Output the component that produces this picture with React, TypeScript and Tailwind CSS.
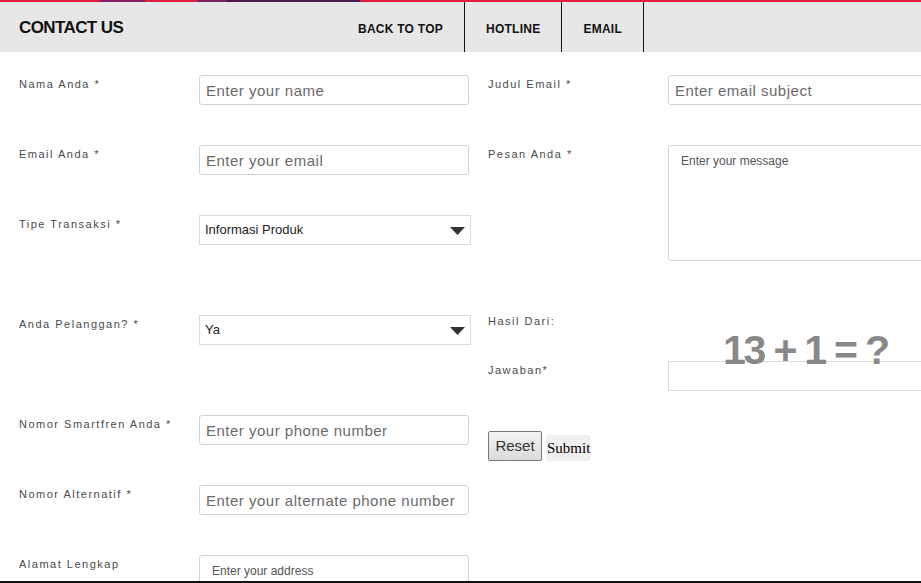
import React from "react";

const F = { fontFamily: '"Liberation Sans", Arial, sans-serif' };

function Label({ children }: { children: React.ReactNode }) {
  return (
    <div className="w-[180px] shrink-0 mt-[2px] text-[11px] leading-[15px] tracking-[1.5px] text-[#4a4a4a]">
      {children}
    </div>
  );
}

function TextInput({ ph }: { ph: string }) {
  return (
    <input
      placeholder={ph}
      className="w-[270px] h-[30px] rounded-[3px] border border-[#d2d2d2] bg-white px-[6px] pt-[1px] text-[15px] tracking-[0.5px] text-[#555] placeholder:text-[#6a6a6a] outline-none"
      style={F}
    />
  );
}

function Select({ value }: { value: string }) {
  return (
    <div className="w-[272px] h-[30px] border border-[#dadada] bg-white flex items-center justify-between pl-[5px] pr-[5px]">
      <span className="text-[13px] text-[#222]">{value}</span>
      <svg width="15" height="8" viewBox="0 0 15 8" className="mt-[2px]">
        <polygon points="0,0 15,0 7.5,8" fill="#333" />
      </svg>
    </div>
  );
}

function Row({ label, children, mt }: { label: string; children: React.ReactNode; mt: string }) {
  return (
    <div className={`flex items-start ${mt}`}>
      <Label>{label}</Label>
      {children}
    </div>
  );
}

export default function App() {
  return (
    <div
      className="w-[921px] h-[583px] overflow-hidden bg-white border-b-2 border-[#111] box-border"
      style={F}
    >
      {/* top stripe */}
      <div className="flex h-[2px]">
        <div className="w-[100px] bg-[#e01d40]" />
        <div className="w-[45px] bg-[#8a1e62]" />
        <div className="w-[52px] bg-[#e01d40]" />
        <div className="w-[30px] bg-[#7b2463]" />
        <div className="w-[133px] bg-[#4b1b4f]" />
        <div className="flex-1 bg-[#e01d40]" />
      </div>
      {/* header */}
      <div className="flex h-[50px] bg-[#e7e7e7]">
        <div className="w-[337px] pl-[19px] pt-[14px]">
          <span className="text-[17px] leading-[20px] font-bold tracking-[-0.6px] text-[#111]">
            CONTACT US
          </span>
        </div>
        <div className="flex">
          <div className="flex items-center pt-[4px] px-[21px] border-r border-[#111] text-[12px] font-bold tracking-[0.25px] text-[#111]">
            BACK TO TOP
          </div>
          <div className="flex items-center pt-[4px] px-[21px] border-r border-[#111] text-[12px] font-bold tracking-[0.25px] text-[#111]">
            HOTLINE
          </div>
          <div className="flex items-center pt-[4px] px-[21px] border-r border-[#111] text-[12px] font-bold tracking-[0.25px] text-[#111]">
            EMAIL
          </div>
        </div>
      </div>
      {/* form */}
      <div className="flex pl-[19px] pt-[23px]">
        <div className="w-[469px] shrink-0 flex flex-col">
          <Row label="Nama Anda *" mt="mt-0">
            <TextInput ph="Enter your name" />
          </Row>
          <Row label="Email Anda *" mt="mt-[40px]">
            <TextInput ph="Enter your email" />
          </Row>
          <Row label="Tipe Transaksi *" mt="mt-[40px]">
            <Select value="Informasi Produk" />
          </Row>
          <Row label="Anda Pelanggan? *" mt="mt-[70px]">
            <Select value="Ya" />
          </Row>
          <Row label="Nomor Smartfren Anda *" mt="mt-[70px]">
            <TextInput ph="Enter your phone number" />
          </Row>
          <Row label="Nomor Alternatif *" mt="mt-[40px]">
            <TextInput ph="Enter your alternate phone number" />
          </Row>
          <Row label="Alamat Lengkap" mt="mt-[40px]">
            <textarea
              placeholder="Enter your address"
              className="w-[270px] h-[80px] rounded-[3px] border border-[#d2d2d2] px-[12px] pt-[6px] text-[12px] text-[#555] placeholder:text-[#555] resize-none outline-none"
              style={F}
            />
          </Row>
        </div>
        <div className="flex flex-col shrink-0">
          <Row label="Judul Email *" mt="mt-0">
            <TextInput ph="Enter email subject" />
          </Row>
          <Row label="Pesan Anda *" mt="mt-[40px]">
            <textarea
              placeholder="Enter your message"
              className="w-[270px] h-[116px] rounded-[3px] border border-[#d2d2d2] px-[12px] pt-[6px] text-[12px] text-[#555] placeholder:text-[#555] resize-none outline-none"
              style={F}
            />
          </Row>
          <div className="flex items-start mt-[51px] h-[17px]">
            <Label>Hasil Dari:</Label>
            <div className="relative">
              <div className="absolute z-10 left-[55px] top-[18px] whitespace-nowrap text-[41px] leading-[41px] font-bold tracking-[-2.2px] text-[#888]">
                13 + 1 = ?
              </div>
            </div>
          </div>
          <Row label="Jawaban*" mt="mt-[32px]">
            <input className="w-[270px] h-[30px] border border-[#dadada] bg-white outline-none" />
          </Row>
          <div className="flex items-start mt-[40px] gap-[4px]">
            <button className="h-[30px] w-[54px] rounded-[2px] border border-[#777] bg-gradient-to-b from-[#f4f4f4] to-[#dadada] text-[15px] text-[#333]">
              Reset
            </button>
            <button
              className="mt-[4px] h-[26px] px-[1px] rounded-[3px] bg-[#f0f0f0] text-[15px] text-black"
              style={{ fontFamily: '"Liberation Serif", "Times New Roman", serif' }}
            >
              Submit
            </button>
          </div>
        </div>
      </div>
    </div>
  );
}
